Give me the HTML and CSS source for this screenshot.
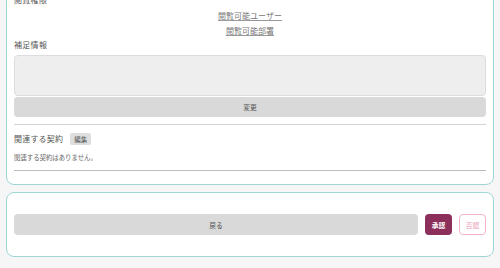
FILE: index.html
```html
<!DOCTYPE html>
<html lang="ja">
<head>
<meta charset="utf-8">
<link rel="stylesheet" href="styles.css">
</head>
<body>
<div class="page">
  <section class="card card-main">
    <div class="label">閲覧権限</div>
    <div class="links">
      <a class="link link-first" href="#">閲覧可能ユーザー</a>
      <a class="link" href="#">閲覧可能部署</a>
    </div>
    <div class="label">補足情報</div>
    <textarea class="note"></textarea>
    <button class="btn btn-gray btn-change">変更</button>
    <hr class="rule">
    <div class="related-head">
      <span class="related-title">関連する契約</span>
      <span class="badge">編集</span>
    </div>
    <p class="empty">関連する契約はありません。</p>
    <hr class="rule rule-dark">
  </section>
  <section class="card card-actions">
    <button class="btn btn-gray btn-back">戻る</button>
    <button class="btn btn-approve">承認</button>
    <button class="btn btn-reject">否認</button>
  </section>
</div>
</body>
</html>
```

FILE: styles.css
```css
html, body {
  margin: 0;
  padding: 0;
  background: #f6f6f6;
  font-family: "Noto Sans CJK JP", "Noto Sans", sans-serif;
  color: #555;
  overflow: hidden;
}
.page {
  padding: 0 6px;
}
.card {
  background: #fff;
  border: 1px solid #9fd6d6;
  border-radius: 8px;
  box-sizing: border-box;
  padding: 0 7px;
}
.card-main {
  margin-top: -20px;
  padding-top: 12px;
  padding-bottom: 13px;
  display: flex;
  flex-direction: column;
}
.label {
  font-size: 8px;
  line-height: 14px;
  letter-spacing: 0.3px;
  color: #555;
}
.links {
  display: flex;
  flex-direction: column;
  align-items: center;
  margin-top: 1px;
}
.link {
  font-size: 8px;
  line-height: 14px;
  color: #777;
  text-decoration: underline;
  text-decoration-color: #999;
}
.link-first {
  line-height: 16px;
}
.note {
  display: block;
  margin: 3px 0 0;
  height: 41px;
  width: 100%;
  box-sizing: border-box;
  background: #eeeeee;
  border: 1px solid #dcdcdc;
  border-radius: 4px;
  resize: none;
  padding: 0;
}
.btn {
  font-family: inherit;
  border: none;
  border-radius: 4px;
  font-size: 6.8px;
  padding: 0;
  cursor: pointer;
}
.btn-gray {
  background: #d9d9d9;
  color: #555;
}
.btn-change {
  margin-top: 1px;
  height: 20px;
  width: 100%;
}
.rule {
  border: none;
  border-top: 1px solid #d4d4d4;
  margin: 7px 0 0;
  height: 0;
}
.rule-dark {
  border-top-color: #bdbdbd;
}
.related-head {
  margin-top: 8px;
  display: flex;
  align-items: center;
  gap: 7px;
  height: 12px;
}
.related-title {
  font-size: 8px;
  letter-spacing: 0.2px;
  line-height: 12px;
}
.badge {
  background: #dedede;
  color: #555;
  font-size: 6.5px;
  line-height: 12px;
  height: 12px;
  padding: 0 4px;
  border-radius: 2px;
}
.empty {
  margin: 8px 0 0;
  font-size: 6.4px;
  line-height: 10px;
  color: #666;
}
.card-actions {
  margin-top: 7px;
  padding-top: 21px;
  padding-bottom: 21px;
  display: flex;
  gap: 7px;
}
.btn-back {
  flex: 1;
  height: 21px;
}
.btn-approve {
  width: 27px;
  height: 21px;
  background: #8c2f5b;
  color: #fff;
  font-weight: bold;
}
.btn-reject {
  width: 27px;
  height: 21px;
  background: #fff;
  border: 1px solid #f2b3ca;
  color: #e89ab8;
  box-sizing: border-box;
}
```
